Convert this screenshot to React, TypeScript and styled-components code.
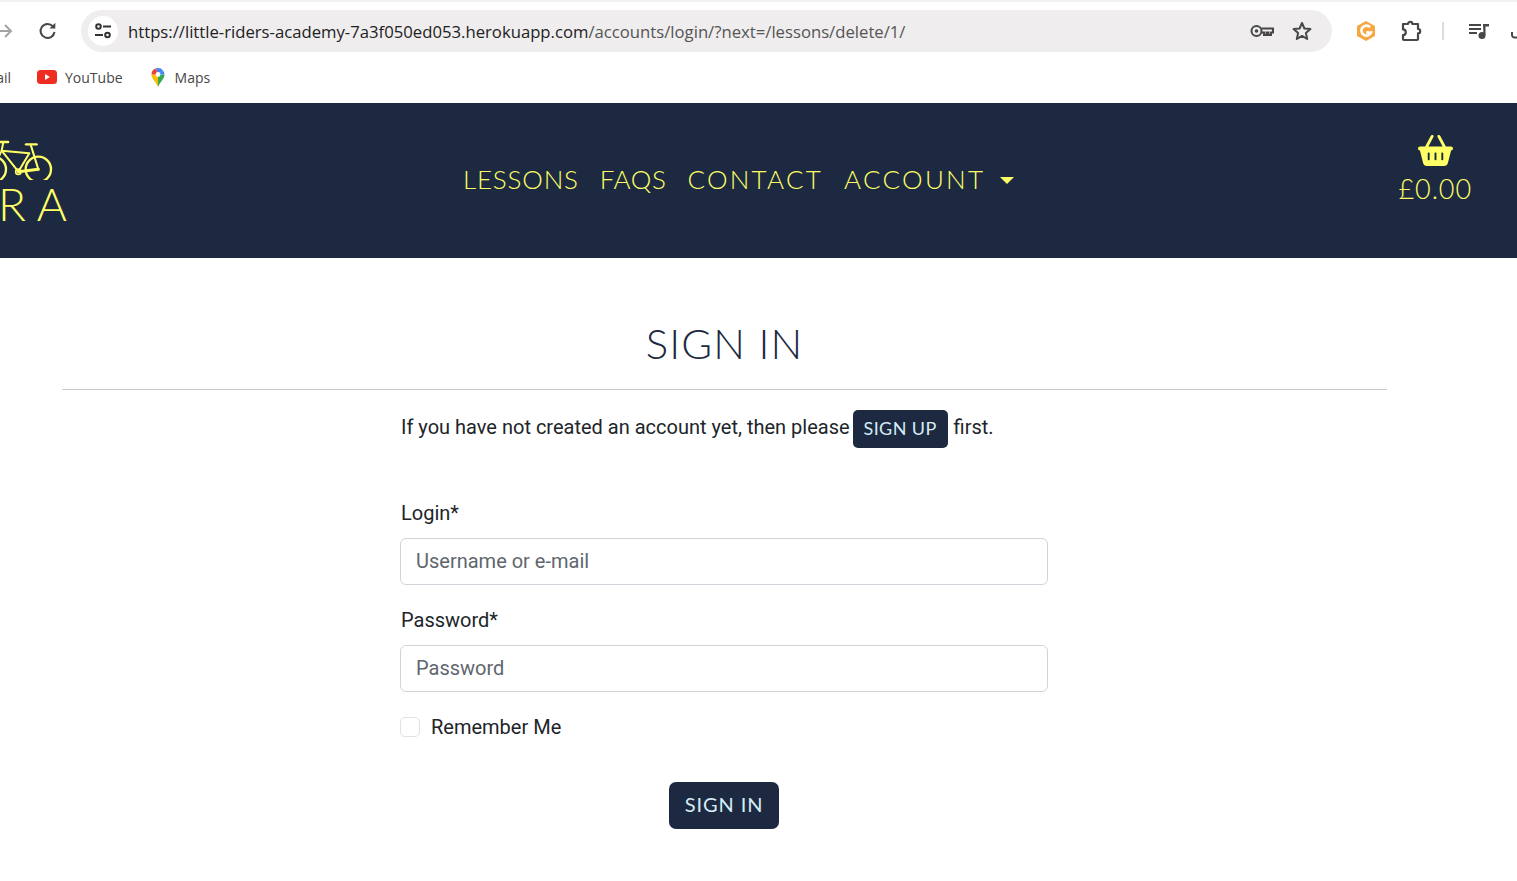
import React from 'react';
import styled, { createGlobalStyle } from 'styled-components';
import { FaBasketShopping } from 'react-icons/fa6';

const GlobalStyle = createGlobalStyle`
  html, body {
    margin: 0;
    padding: 0;
    background: #fff;
    overflow: hidden;
  }
  * {
    box-sizing: border-box;
  }
`;

const headingFont = `Lato, "Liberation Sans", sans-serif`;
const bodyFont = `Roboto, "Liberation Sans", sans-serif`;
const chromeFont = `"Open Sans", "Liberation Sans", sans-serif`;

const Page = styled.div`
  width: 1517px;
  height: 881px;
  overflow: hidden;
  font-family: ${bodyFont};
  color: #212529;
`;

const TabStrip = styled.div`
  height: 2px;
  background: #f1f1f1;
`;

const Toolbar = styled.div`
  height: 55px;
  display: flex;
  align-items: center;
  padding: 3px 0 0;
  margin-left: -5px;
`;

const NavIcon = styled.div<{ $w: number }>`
  width: ${({ $w }) => $w}px;
  flex: none;
  display: flex;
  justify-content: center;
  align-items: center;
`;

const UrlPill = styled.div`
  width: 1251px;
  height: 42px;
  flex: none;
  border-radius: 21px;
  background: #efedee;
  display: flex;
  align-items: center;
  padding: 0 20px 0 7px;
`;

const SiteButton = styled.div`
  width: 30px;
  height: 30px;
  border-radius: 50%;
  background: #fff;
  display: flex;
  align-items: center;
  justify-content: center;
  flex: none;
`;

const UrlText = styled.div`
  margin-left: 10px;
  flex: 1;
  font-family: ${chromeFont};
  font-size: 16.7px;
  color: #555;
  white-space: nowrap;
  span {
    color: #222;
  }
`;

const PillIcons = styled.div`
  display: flex;
  align-items: center;
  gap: 18px;
`;

const ToolIcons = styled.div`
  display: flex;
  align-items: center;
  margin-left: 24px;
  flex: none;
`;

const BrandSlot = styled.div`
  display: flex;
  margin-right: 13px;
`;

const Divider = styled.div`
  width: 2px;
  height: 18px;
  margin: 0 24px 0 7px;
  background: #dcdcdc;
`;

const Bookmarks = styled.div`
  height: 46px;
  display: flex;
  align-items: center;
  font-family: ${chromeFont};
  font-size: 14px;
  color: #474747;
  margin-left: -27px;
  padding-bottom: 6px;
`;

const Bookmark = styled.div<{ $gap: number }>`
  display: flex;
  align-items: center;
  gap: 8px;
  margin-right: ${({ $gap }) => $gap}px;
  white-space: nowrap;
`;

const SiteHeader = styled.header`
  height: 155px;
  background: #1c2941;
  color: #ffff66;
  display: flex;
  align-items: center;
  font-family: ${headingFont};
`;

const Logo = styled.div`
  width: 67px;
  height: 155px;
  flex: none;
  overflow: hidden;
  display: flex;
  flex-direction: column;
  align-items: flex-end;
  padding-top: 27px;
`;

const LogoBike = styled.svg`
  width: 60px;
  height: 50px;
  align-self: flex-start;
  flex: none;
`;

const LogoText = styled.div`
  font-weight: 300;
  font-size: 46px;
  line-height: 46px;
  letter-spacing: 11px;
  margin-right: -11px;
  margin-top: 1px;
  white-space: nowrap;
`;

const MainNav = styled.nav`
  margin-left: 396px;
  display: flex;
  align-items: center;
  gap: 21px;
  font-weight: 300;
  font-size: 26px;
  white-space: nowrap;
  padding-bottom: 4px;
`;

const NavLink = styled.span<{ $track: number }>`
  letter-spacing: ${({ $track }) => $track}px;
`;

const Caret = styled.span`
  display: inline-block;
  width: 0;
  height: 0;
  margin-left: 15px;
  vertical-align: 5px;
  border-top: 7px solid #ffff66;
  border-left: 7px solid transparent;
  border-right: 7px solid transparent;
`;

const Cart = styled.div`
  margin-left: auto;
  margin-right: 45px;
  display: flex;
  flex-direction: column;
  align-items: center;
  font-size: 27px;
  font-weight: 300;
  letter-spacing: 0.9px;
  line-height: 34px;
  padding-bottom: 23px;
`;

const BasketIcon = styled(FaBasketShopping)`
  margin-bottom: 4px;
`;

const Main = styled.main`
  width: 1325px;
  margin-left: 62px;
`;

const Title = styled.h1`
  margin: 0;
  padding-top: 58px;
  height: 132px;
  border-bottom: 1px solid #c9cacc;
  text-align: center;
  font-family: ${headingFont};
  font-weight: 300;
  font-size: 42px;
  line-height: 54px;
  letter-spacing: 1.1px;
  color: #1c2941;
`;

const FormColumn = styled.div`
  width: 648px;
  margin-left: 338px;
  padding-top: 20px;
`;

const Intro = styled.p`
  margin: 0 0 50px;
  font-size: 20px;
  line-height: 34px;
  height: 38px;
  padding-left: 1px;
  display: flex;
  align-items: flex-start;
  white-space: nowrap;
`;

const SmallButton = styled.span`
  display: inline-block;
  height: 38px;
  width: 95px;
  line-height: 36px;
  text-align: center;
  margin: 0 6px 0 3px;
  background: #1c2941;
  color: #d6ecf5;
  border-radius: 5px;
  font-family: ${headingFont};
  font-size: 18px;
  letter-spacing: 0.4px;
`;

const Field = styled.div`
  margin-bottom: 20px;
`;

const FieldLabel = styled.label`
  display: block;
  font-size: 20px;
  line-height: 30px;
  padding-left: 1px;
  margin-bottom: 10px;
`;

const TextInput = styled.input`
  display: block;
  width: 100%;
  height: 47px;
  padding: 0 15px 2px;
  border: 1px solid #ced4da;
  border-radius: 6px;
  background: #fff;
  font-family: ${bodyFont};
  font-size: 20px;
  &::placeholder {
    color: #5f666d;
    opacity: 1;
  }
`;

const CheckRow = styled.label`
  display: flex;
  align-items: center;
  gap: 11px;
  font-size: 20px;
  line-height: 30px;
  margin-top: 20px;
`;

const CheckBox = styled.span`
  width: 20px;
  height: 20px;
  flex: none;
  border: 1px solid #dee2e6;
  border-radius: 5px;
  background: #fff;
`;

const Actions = styled.div`
  display: flex;
  justify-content: center;
  margin-top: 40px;
`;

const SubmitButton = styled.button`
  height: 47px;
  width: 110px;
  padding: 0 0 3px;
  border: none;
  border-radius: 7px;
  background: #1c2941;
  color: #d6ecf5;
  font-family: ${headingFont};
  font-size: 20px;
  letter-spacing: 0.9px;
`;

const ForwardIcon = () => (
  <svg width="16" height="16" viewBox="0 0 16 16" fill="none" stroke="#a3a3a3" strokeWidth="2">
    <path d="M1 8h13M8 2l6 6-6 6" />
  </svg>
);

const ReloadIcon = () => (
  <svg width="20" height="20" viewBox="0 0 20 20" fill="none" stroke="#474747" strokeWidth="2">
    <path d="M16.500 11a7 7 0 1 1-1.600-5.600" />
    <path d="M11.500 7.500h5.800V1.700z" fill="#474747" stroke="none" />
  </svg>
);

const TuneIcon = () => (
  <svg width="18" height="18" viewBox="0 0 18 18" fill="none" stroke="#333" strokeWidth="2">
    <circle cx="4.500" cy="4.500" r="2.300" />
    <path d="M9 4.500h8M1 13h8" />
    <circle cx="13.500" cy="13" r="2.300" />
  </svg>
);

const KeyIcon = () => (
  <svg width="24" height="14" viewBox="0 0 24 14" fill="none" stroke="#474747" strokeWidth="2">
    <circle cx="6.500" cy="7" r="5" />
    <circle cx="6.500" cy="7" r="1.800" fill="#474747" stroke="none" />
    <path d="M11.500 4.500H23v4h-2v2.500h-2.500V8.500h-2V11H14V8.500h-2.500" />
  </svg>
);

const StarIcon = () => (
  <svg width="20" height="20" viewBox="0 0 20 20" fill="none" stroke="#474747" strokeWidth="2" strokeLinejoin="round">
    <path d="M10 2l2.400 5.500 6 .6-4.500 4 1.300 5.900-5.200-3.100-5.200 3.100 1.300-5.900-4.500-4 6-.6z" />
  </svg>
);

const BrandIcon = () => (
  <svg width="20" height="22" viewBox="0 0 20 22">
    <path d="M10 1l9 5v10l-9 5-9-5V6z" fill="#f5a742" />
    <path d="M14 7.200A5 5 0 1 0 15 12.500H10" fill="none" stroke="#fff" strokeWidth="2.600" />
  </svg>
);

const PuzzleIcon = () => (
  <svg width="22" height="22" viewBox="0 0 22 22" fill="none" stroke="#474747" strokeWidth="2.200" strokeLinejoin="round">
    <path d="M2 4h5a2.200 2.200 0 0 1 4.400 0H17v5a2.200 2.200 0 0 1 0 4.400V19a1 1 0 0 1-1 1H3a1 1 0 0 1-1-1v-4a2.800 2.800 0 0 0 0-5.600z" />
  </svg>
);

const QueueIcon = () => (
  <svg width="22" height="18" viewBox="0 0 22 18" fill="#474747">
    <path d="M1 2h12v2H1zM1 6h12v2H1zM1 10h8v2H1z" />
    <path d="M15 2h6v2.500h-3.500V13h-2z" />
    <circle cx="14" cy="13.500" r="3.500" />
  </svg>
);

const PartialIcon = () => (
  <svg width="10" height="16" viewBox="0 0 10 16" fill="none" stroke="#474747" strokeWidth="2">
    <path d="M1 9v3a2.500 2.500 0 0 0 2.500 2.500H8" />
  </svg>
);

const YouTubeIcon = () => (
  <svg width="20" height="14" viewBox="0 0 20 14">
    <rect width="20" height="14" rx="3.500" fill="#ee2c22" />
    <path d="M8 4l5 3-5 3z" fill="#fff" />
  </svg>
);

const MapsIcon = () => (
  <svg width="18" height="20" viewBox="0 0 16 20">
    <path d="M8 20C6 15 1.500 12 1.500 7.500L8 7.500z" fill="#fbbc04" />
    <path d="M8 20c2-5 6.500-8 6.500-12.500L8 7.500z" fill="#34a853" />
    <path d="M1.500 7.500A6.500 6.500 0 0 1 6 1.300L8 7.500z" fill="#ea4335" />
    <path d="M6 1.300A6.500 6.500 0 0 1 13 3.400L8 7.500z" fill="#4285f4" />
    <path d="M13 3.400A6.500 6.500 0 0 1 14.500 7.500L8 7.500z" fill="#4285f4" />
    <circle cx="8" cy="7.500" r="2.400" fill="#fff" />
  </svg>
);

// drawn in 3x units so it lines up with the logo crop
const BikeMark = () => (
  <LogoBike viewBox="0 30 180 150" fill="none" stroke="#ffff66" strokeLinecap="round" strokeLinejoin="round">
    <circle cx="115" cy="148" r="38" strokeWidth="7" />
    <circle cx="-20" cy="148" r="38" strokeWidth="7" />
    <path d="M5 92L88 100L55 155L5 92" strokeWidth="6" />
    <path d="M55 155L115 148" strokeWidth="9" />
    <path d="M5 92L-20 148" strokeWidth="5" />
    <path d="M92 74L115 148" strokeWidth="6" />
    <path d="M78 73H110" strokeWidth="7" />
    <path d="M0 66H24" strokeWidth="8" />
    <path d="M10 66L5 92" strokeWidth="6" />
    <circle cx="55" cy="155" r="8" strokeWidth="5" />
  </LogoBike>
);

export default function App() {
  return (
    <Page>
      <GlobalStyle />
      <TabStrip />
      <Toolbar>
        <NavIcon $w={20}>
          <ForwardIcon />
        </NavIcon>
        <NavIcon $w={66}>
          <ReloadIcon />
        </NavIcon>
        <UrlPill>
          <SiteButton>
            <TuneIcon />
          </SiteButton>
          <UrlText>
            <span>https://little-riders-academy-7a3f050ed053.herokuapp.com</span>/accounts/login/?next=/lessons/delete/1/
          </UrlText>
          <PillIcons>
            <KeyIcon />
            <StarIcon />
          </PillIcons>
        </UrlPill>
        <ToolIcons>
          <BrandSlot>
            <BrandIcon />
          </BrandSlot>
          <NavIcon $w={46}>
            <PuzzleIcon />
          </NavIcon>
          <Divider />
          <QueueIcon />
          <NavIcon $w={52}>
            <PartialIcon />
          </NavIcon>
        </ToolIcons>
      </Toolbar>
      <Bookmarks>
        <Bookmark $gap={26}>Gmail</Bookmark>
        <Bookmark $gap={26}>
          <YouTubeIcon />
          YouTube
        </Bookmark>
        <Bookmark $gap={0}>
          <MapsIcon />
          Maps
        </Bookmark>
      </Bookmarks>
      <SiteHeader>
        <Logo>
          <BikeMark />
          <LogoText>LRA</LogoText>
        </Logo>
        <MainNav>
          <NavLink $track={0.8}>LESSONS</NavLink>
          <NavLink $track={0.6}>FAQS</NavLink>
          <NavLink $track={2.2}>CONTACT</NavLink>
          <NavLink $track={2.3}>
            ACCOUNT
            <Caret />
          </NavLink>
        </MainNav>
        <Cart>
          <BasketIcon size={35} />
          £0.00
        </Cart>
      </SiteHeader>
      <Main>
        <Title>SIGN IN</Title>
        <FormColumn>
          <Intro>
            If you have not created an account yet, then please
            <SmallButton>SIGN UP</SmallButton>
            first.
          </Intro>
          <Field>
            <FieldLabel>Login*</FieldLabel>
            <TextInput placeholder="Username or e-mail" readOnly />
          </Field>
          <Field>
            <FieldLabel>Password*</FieldLabel>
            <TextInput placeholder="Password" readOnly />
          </Field>
          <CheckRow>
            <CheckBox />
            Remember Me
          </CheckRow>
          <Actions>
            <SubmitButton>SIGN IN</SubmitButton>
          </Actions>
        </FormColumn>
      </Main>
    </Page>
  );
}
